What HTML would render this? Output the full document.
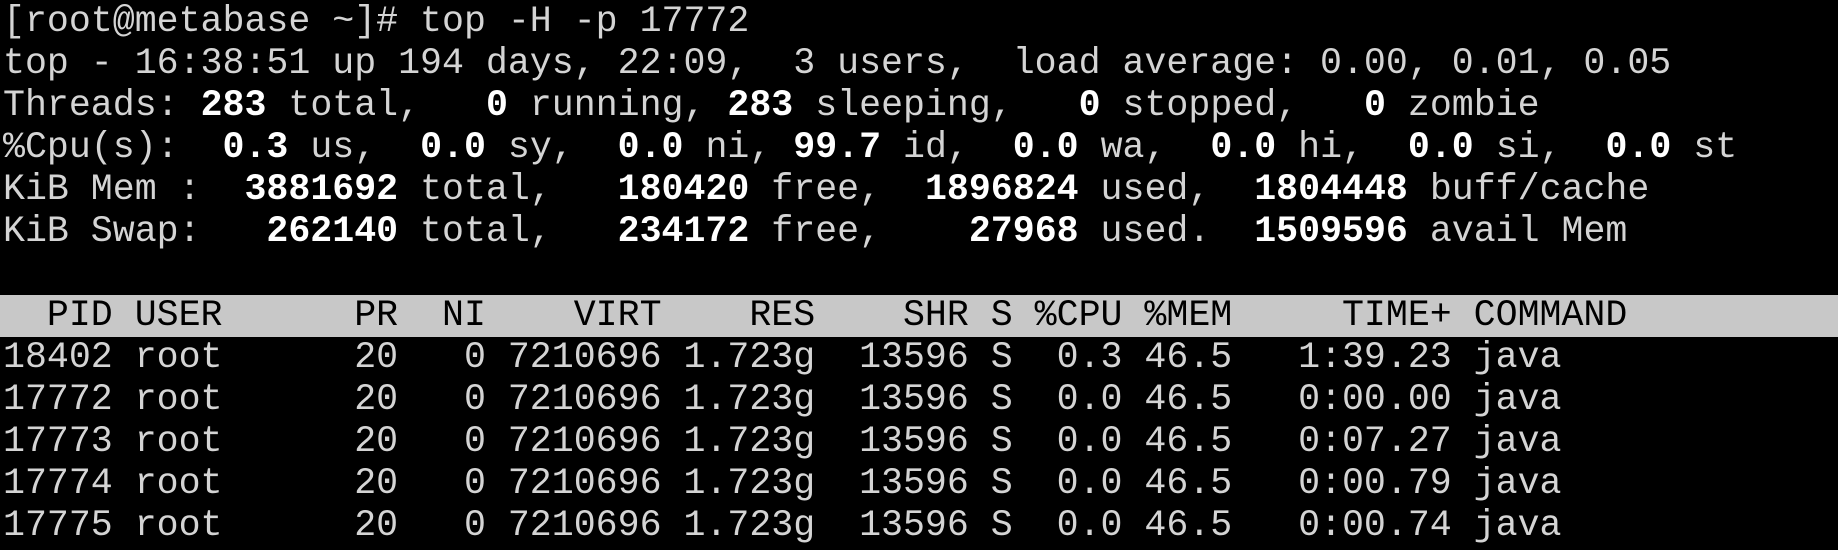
<!DOCTYPE html>
<html><head><style>
html,body{margin:0;padding:0;background:#000;width:1838px;height:550px;overflow:hidden}
pre{margin:0;position:absolute;left:3px;top:1px;font-family:"Liberation Mono","DejaVu Sans Mono",monospace;font-size:36.6px;line-height:42px;color:#d4d4d4;letter-spacing:0px}
b{color:#fff;font-weight:bold}
.bar{display:block;background:#c8c8c8;color:#000;margin-left:-3px;padding-left:3px;width:1838px}
</style></head><body>
<pre>[root@metabase ~]# top -H -p 17772
top - 16:38:51 up 194 days, 22:09,  3 users,  load average: 0.00, 0.01, 0.05
Threads: <b>283</b> total,   <b>0</b> running, <b>283</b> sleeping,   <b>0</b> stopped,   <b>0</b> zombie
%Cpu(s):  <b>0.3</b> us,  <b>0.0</b> sy,  <b>0.0</b> ni, <b>99.7</b> id,  <b>0.0</b> wa,  <b>0.0</b> hi,  <b>0.0</b> si,  <b>0.0</b> st
KiB Mem :  <b>3881692</b> total,   <b>180420</b> free,  <b>1896824</b> used,  <b>1804448</b> buff/cache
KiB Swap:   <b>262140</b> total,   <b>234172</b> free,    <b>27968</b> used.  <b>1509596</b> avail Mem

<span class="bar">  PID USER      PR  NI    VIRT    RES    SHR S %CPU %MEM     TIME+ COMMAND</span>18402 root      20   0 7210696 1.723g  13596 S  0.3 46.5   1:39.23 java
17772 root      20   0 7210696 1.723g  13596 S  0.0 46.5   0:00.00 java
17773 root      20   0 7210696 1.723g  13596 S  0.0 46.5   0:07.27 java
17774 root      20   0 7210696 1.723g  13596 S  0.0 46.5   0:00.79 java
17775 root      20   0 7210696 1.723g  13596 S  0.0 46.5   0:00.74 java
</pre>
</body></html>
